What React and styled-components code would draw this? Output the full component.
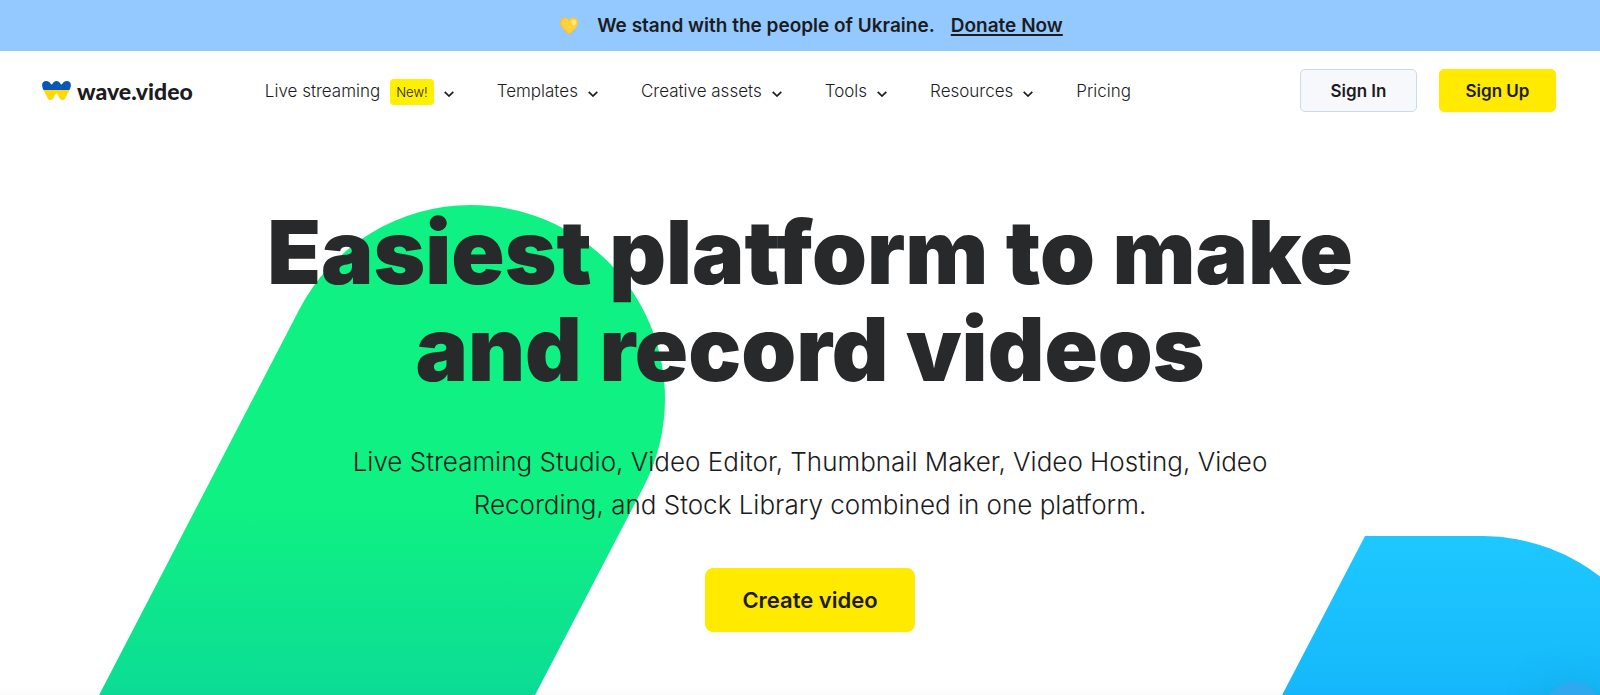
import React from "react";
import styled, { createGlobalStyle } from "styled-components";

const GlobalStyle = createGlobalStyle`
  *, *::before, *::after { box-sizing: border-box; }
  body {
    margin: 0;
    background: #fff;
    color: #1c1c1e;
    font-family: Inter, "Liberation Sans", sans-serif;
  }
  button { font-family: inherit; color: inherit; cursor: pointer; }
  a { color: inherit; }
`;

const Page = styled.div`
  display: flex;
  flex-direction: column;
  min-height: 100vh;
  overflow: hidden;
`;

const Banner = styled.aside`
  display: flex;
  align-items: center;
  justify-content: center;
  gap: 16px;
  padding: 14px 24px 13px 46px;
  background: #94c9ff;
  font-size: 19px;
  line-height: 24px;
  font-weight: 600;
`;

const Heart = styled.svg`
  width: 20px;
  height: 20px;
  margin-right: 2px;
`;

const DonateLink = styled.a`
  text-decoration: underline;
  text-decoration-thickness: 2px;
  text-underline-offset: 2px;
`;

const Header = styled.header`
  display: flex;
  align-items: center;
  padding: 18px 44px 19px 42px;
`;

const Logo = styled.a`
  display: flex;
  align-items: center;
  gap: 6px;
  min-width: 148px;
  margin-right: 72px;
  font-family: Lato, sans-serif;
  font-size: 23px;
  line-height: 26px;
  font-weight: 900;
  text-decoration: none;
`;

const LogoMark = styled.svg`
  width: 29px;
  height: 19px;
`;

const Nav = styled.nav`
  display: flex;
  align-items: center;
  gap: 43px;
  flex: 1;
`;

const NavButton = styled.button`
  display: flex;
  align-items: center;
  gap: 10px;
  padding: 0;
  border: 0;
  background: none;
  font-size: 17px;
  line-height: 26px;
  font-weight: 300;
`;

const NavLink = styled.a`
  font-size: 17px;
  line-height: 26px;
  font-weight: 300;
  text-decoration: none;
`;

const Badge = styled.span`
  margin-top: 2px;
  padding: 0 6px;
  border-radius: 4px;
  background: #fff000;
  font-size: 13px;
  line-height: 26px;
`;

const Chevron = styled.svg`
  width: 10px;
  height: 6px;
  margin-top: 6px;
`;

const Actions = styled.div`
  display: flex;
  gap: 22px;
`;

const Button = styled.button`
  height: ${(p) => (p.$large ? "64px" : "43px")};
  padding: 0 ${(p) => (p.$large ? "36px" : "24px")};
  min-width: ${(p) => (p.$large ? "209px" : "117px")};
  border: 1px solid ${(p) => (p.$quiet ? "#c9dbe6" : "#ffea00")};
  border-radius: ${(p) => (p.$large ? "8px" : "5px")};
  background: ${(p) => (p.$quiet ? "#f6f8fc" : "#ffea00")};
  font-size: ${(p) => (p.$large ? "22px" : "17px")};
  font-weight: 600;
`;

const Hero = styled.main`
  position: relative;
  flex: 1;
  display: flex;
  flex-direction: column;
  align-items: center;
  padding: 73px 24px 64px 44px;
  text-align: center;
`;

const GreenShape = styled.svg`
  position: absolute;
  top: 74px;
  left: calc(50% - 704px);
  width: 570px;
  height: 494px;
`;

const BlueShape = styled.svg`
  position: absolute;
  top: 405px;
  left: calc(50% + 478px);
  width: 400px;
  height: 163px;
`;

const Title = styled.h1`
  position: relative;
  margin: 0 0 42px;
  max-width: 1160px;
  color: #28292b;
  font-size: 88px;
  line-height: 97px;
  font-weight: 900;
`;

const Lead = styled.p`
  position: relative;
  margin: 0 0 42px;
  max-width: 960px;
  font-size: 26px;
  line-height: 43px;
  font-weight: 300;
`;

const HeroAction = styled.div`
  position: relative;
`;

const ChatBubble = styled.button`
  position: fixed;
  right: 0;
  bottom: -42px;
  width: 55px;
  height: 55px;
  border: 0;
  border-radius: 50%;
  background: #30a8f0;
  box-shadow: 0 4px 40px rgba(20, 130, 160, 0.35);
`;

const BottomShade = styled.div`
  position: fixed;
  left: 0;
  right: 0;
  bottom: 0;
  height: 10px;
  pointer-events: none;
  background: linear-gradient(rgba(40, 60, 80, 0), rgba(40, 60, 80, 0.02));
`;

function NavMenu({ label, badge }) {
  return (
    <NavButton type="button">
      {label}
      {badge && <Badge>{badge}</Badge>}
      <Chevron viewBox="0 0 10 6" fill="none" stroke="#1c1c1e" strokeWidth="1.7" aria-hidden="true">
        <path d="M.7.8 5 5 9.3.8" />
      </Chevron>
    </NavButton>
  );
}

export default function App() {
  return (
    <Page>
      <GlobalStyle />
      <Banner>
        <Heart viewBox="0 0 20 20" aria-hidden="true">
          <path d="M10 19C7 16 1 12 1 6.600C1 3.500 3.100 1.600 5.700 1.600C7.700 1.600 9.200 2.700 10 4.400C10.800 2.700 12.300 1.600 14.300 1.600C16.900 1.600 19 3.500 19 6.600C19 12 13 16 10 19Z" fill="#fcb93c" />
          <path d="M10.400 17.600C7.500 14.800 2.300 11.500 2.300 6.700C2.300 4 4 2.300 6.100 2.300C8.200 2.300 9.600 3.700 10.100 5.500C10.900 3.500 12.400 2.300 14.300 2.300C16.700 2.300 18.500 4 18.500 6.600C18.500 11.400 13.200 14.900 10.400 17.600Z" fill="#ffd23b" />
          <path d="M13 4.500c1.500-1.500 4.300-.8 4.300 1.700 0 1.800-1.400 3.500-2.600 3.200-1.500-.4-2.900-3.700-1.700-4.900Z" fill="#ffe477" />
        </Heart>
        <span>We stand with the people of Ukraine.</span>
        <DonateLink href="#donate">Donate Now</DonateLink>
      </Banner>
      <Header>
        <Logo href="#home">
          <LogoMark viewBox="0 0 29 19" aria-hidden="true">
            <path d="M.2 5C-.4 2 1.700 0 4.200 0 6.400 0 7.700 1.200 8.500 2.600 9.300 3.800 10 3.600 10.700 2.600 11.600 1 12.800 0 14.500 0s2.900 1 3.800 2.600c.7 1 1.400 1.200 2.200 0C21.500 1 22.600 0 24.800 0c2.500 0 4.600 2 4 5-.2 1.500-.8 3-1.300 4H1.500C1 8 .4 6.500.2 5Z" fill="#0757b8" />
            <path d="M1.500 9h26l-4 8c-.7 1.400-1.700 2-3.100 2s-2.300-.7-3-2l-2.100-4c-.4-.8-1.200-.8-1.600 0l-2.100 4c-.7 1.300-1.600 2-3 2s-2.400-.6-3.100-2Z" fill="#ffd90a" />
          </LogoMark>
          wave.video
        </Logo>
        <Nav>
          <NavMenu label="Live streaming" badge="New!" />
          <NavMenu label="Templates" />
          <NavMenu label="Creative assets" />
          <NavMenu label="Tools" />
          <NavMenu label="Resources" />
          <NavLink href="#pricing">Pricing</NavLink>
        </Nav>
        <Actions>
          <Button type="button" $quiet>Sign In</Button>
          <Button type="button">Sign Up</Button>
        </Actions>
      </Header>
      <Hero>
        <GreenShape viewBox="0 0 570 494" aria-hidden="true">
          <defs>
            <linearGradient id="green" x1="0" y1="0" x2="0" y2="1">
              <stop offset="0" stopColor="#0ff182" />
              <stop offset=".6" stopColor="#0ff182" />
              <stop offset="1" stopColor="#0cdc96" />
            </linearGradient>
          </defs>
          <path d="M1 494 203 105A194 194 0 0 1 375 0A194 194 0 0 1 569 194A194 194 0 0 1 547 283L437 494Z" fill="url(#green)" />
        </GreenShape>
        <BlueShape viewBox="0 0 400 163" aria-hidden="true">
          <defs>
            <linearGradient id="blue" x1="0" y1="0" x2="0" y2="1">
              <stop offset="0" stopColor="#1ec8ff" />
              <stop offset="1" stopColor="#15b8fb" />
            </linearGradient>
          </defs>
          <path d="M2 163 87 0H205A194 194 0 0 1 395 163Z" fill="url(#blue)" />
        </BlueShape>
        <Title>Easiest platform to make and record videos</Title>
        <Lead>
          Live Streaming Studio, Video Editor, Thumbnail Maker, Video Hosting, Video Recording, and
          Stock Library combined in one platform.
        </Lead>
        <HeroAction>
          <Button type="button" $large>Create video</Button>
        </HeroAction>
      </Hero>
      <BottomShade />
      <ChatBubble type="button" aria-label="Open chat" />
    </Page>
  );
}
